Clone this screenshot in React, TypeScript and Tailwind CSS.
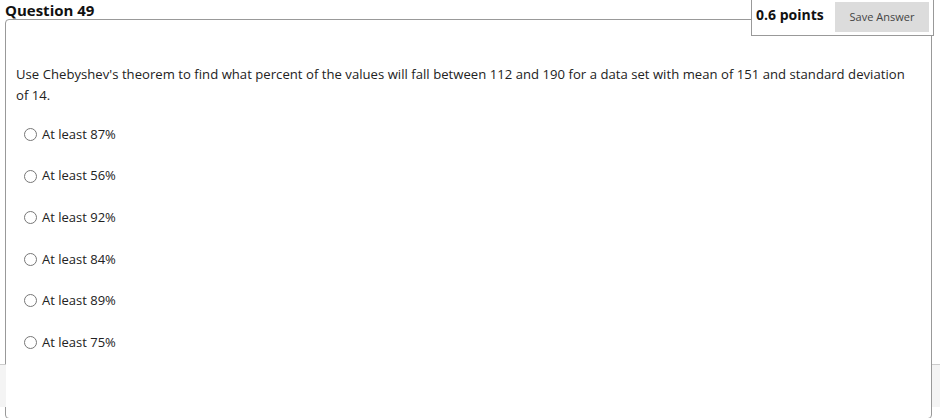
import React from "react";

const options = [
  "At least 87%",
  "At least 56%",
  "At least 92%",
  "At least 84%",
  "At least 89%",
  "At least 75%",
];

const Radio = () => (
  <span className="inline-block h-[13px] w-[13px] shrink-0 rounded-full border border-[#777] bg-white" />
);

export default function App() {
  return (
    <div
      className="relative h-[418px] w-[940px] overflow-hidden bg-white text-[#222]"
      style={{ fontFamily: '"Open Sans", "Liberation Sans", sans-serif' }}
    >
      {/* side strips */}
      <div className="absolute left-0 top-[364px] h-[43px] w-[6px] border-t border-[#ccc] bg-[#f4f4f4]" />
      <div className="absolute right-0 top-[364px] h-[43px] w-[8px] border-t border-[#ccc] bg-[#f4f4f4]" />

      <h2 className="ml-[5px] h-[19px] pt-[1px] text-[15px] font-bold leading-[18px] text-[#111]">
        Question 49
      </h2>

      <div className="ml-[5px] mr-[8px] h-[400px] rounded-[4px] border border-[#999] bg-white pl-[10px] pt-[44px]">
        <p className="max-w-[892px] text-[13.1px] leading-[21px] tracking-[0.03px]">
          Use Chebyshev's theorem to find what percent of the values will fall between 112 and 190 for a data set
          with mean of 151 and standard deviation of 14.
        </p>
        <ul className="mt-[18px] flex flex-col gap-[20.6px] pl-[8px]">
          {options.map((o) => (
            <li key={o} className="flex h-[21px] items-center gap-[5px] text-[13px]">
              <Radio />
              <span>{o}</span>
            </li>
          ))}
        </ul>
      </div>

      <div className="absolute right-[6px] top-[-1px] flex h-[37px] w-[183px] items-start border border-[#999] bg-white pl-[4px] pt-[2px]">
        <span className="mt-[3px] text-[14px] font-bold leading-[20px] text-[#111]">0.6 points</span>
        <button className="ml-auto mr-[4px] h-[30px] w-[94px] bg-[#dcdcdc] text-[11px] text-[#444]">
          Save Answer
        </button>
      </div>
    </div>
  );
}
